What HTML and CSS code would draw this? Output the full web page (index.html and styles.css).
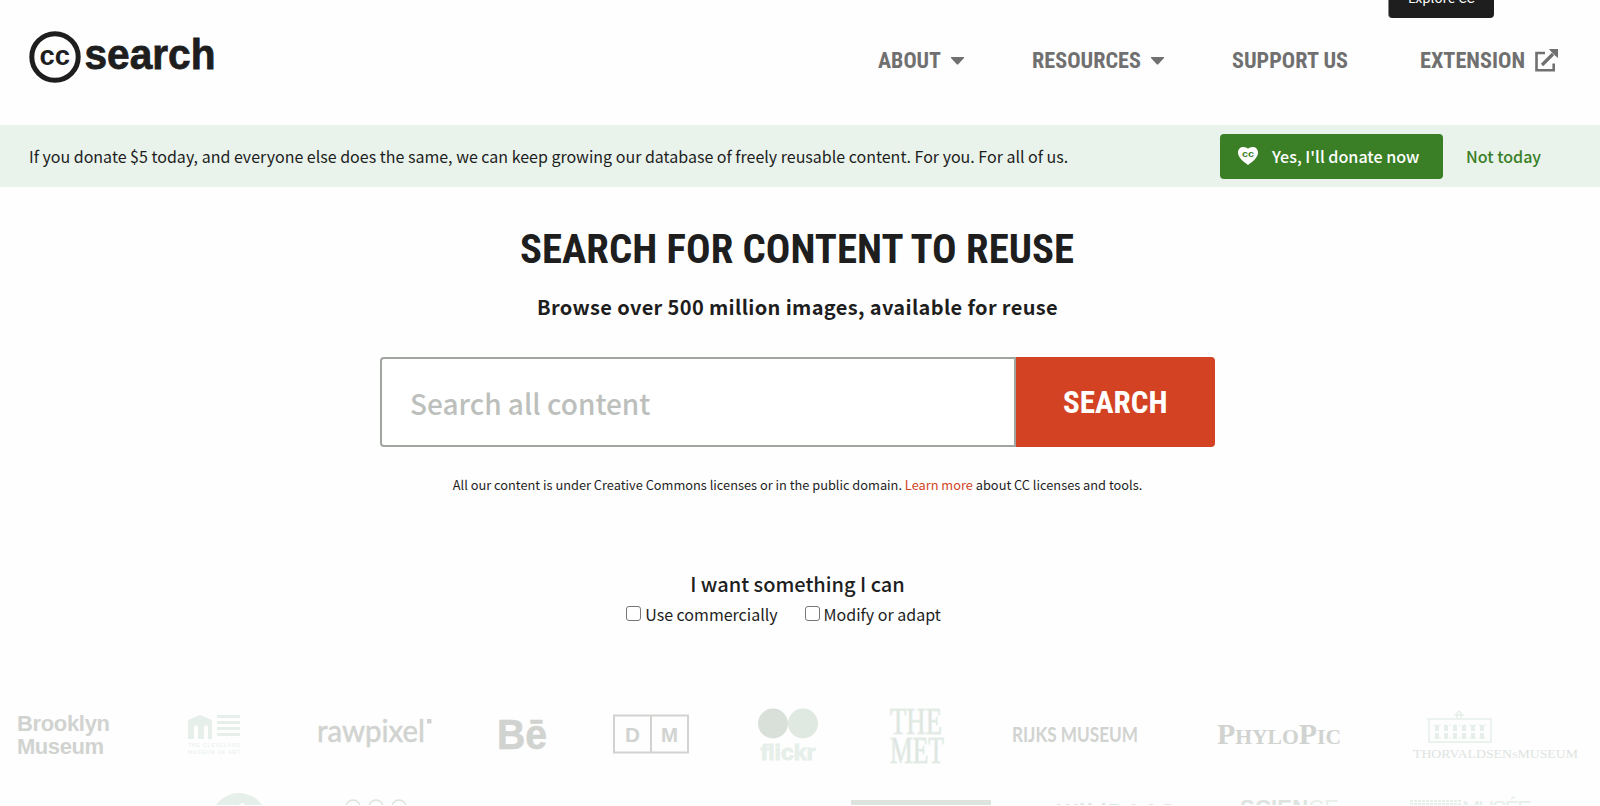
FILE: index.html
```html
<!DOCTYPE html>
<html lang="en">
<head>
<meta charset="utf-8">
<title>CC Search</title>
<link rel="stylesheet" href="styles.css">
</head>
<body>
<header class="header">
  <a class="brand">
    <svg width="190" height="56" viewBox="0 0 190 56">
      <circle cx="26" cy="27" r="23.2" fill="none" stroke="#1e1e1e" stroke-width="5"/>
      <text class="brand-cc" x="10.500" y="34.500" textLength="30.500" lengthAdjust="spacingAndGlyphs">cc</text>
      <text class="brand-text" x="55.500" y="38.500" textLength="131" lengthAdjust="spacingAndGlyphs">search</text>
    </svg>
  </a>
  <nav class="nav">
    <a class="nav-item"><svg width="63" height="30"><text class="cond" y="23" textLength="63" lengthAdjust="spacingAndGlyphs">ABOUT</text></svg><svg class="caret" width="13" height="8"><path d="M0 0H13V1L7.500 7Q6.500 8 5.500 7L0 1Z"/></svg></a>
    <a class="nav-item"><svg width="109" height="30"><text class="cond" y="23" textLength="109" lengthAdjust="spacingAndGlyphs">RESOURCES</text></svg><svg class="caret" width="13" height="8"><path d="M0 0H13V1L7.500 7Q6.500 8 5.500 7L0 1Z"/></svg></a>
    <a class="nav-item"><svg width="116" height="30"><text class="cond" y="23" textLength="116" lengthAdjust="spacingAndGlyphs">SUPPORT US</text></svg></a>
    <a class="nav-item"><svg width="105" height="30"><text class="cond" y="23" textLength="105" lengthAdjust="spacingAndGlyphs">EXTENSION</text></svg><svg class="ext" width="23" height="23" viewBox="0 0 23 23"><path d="M10 4H1.500V21.200H18.700V14.500" fill="none" stroke="#707070" stroke-width="2.600"/><path d="M7 16L18 5" stroke="#707070" stroke-width="3.200"/><path d="M14 0H23V9L20 6.500L16 2.500Z" fill="#707070"/></svg></a>
  </nav>
  <a class="explore"><span>Explore CC</span></a>
</header>

<section class="banner">
  <p class="banner-text">If you donate $5 today, and everyone else does the same, we can keep growing our database of freely reusable content. For you. For all of us.</p>
  <a class="donate"><svg width="20" height="18" viewBox="0 0 20 18"><path d="M10 18C6 15 0 11 0 5.500C0 2 2.500 0 5.300 0C7.300 0 9 .8 10 1.800C11 .8 12.700 0 14.700 0C17.500 0 20 2 20 5.500C20 11 14 15 10 18Z" fill="#fff"/><text class="heart-cc" x="4" y="10" textLength="12" lengthAdjust="spacingAndGlyphs">cc</text></svg><span>Yes, I'll donate now</span></a>
  <a class="later">Not today</a>
</section>

<main class="hero">
  <h1 class="title"><svg width="556" height="48"><text class="cond title-text" x="0" y="38.500" textLength="554" lengthAdjust="spacingAndGlyphs">SEARCH FOR CONTENT TO REUSE</text></svg></h1>
  <h2 class="subtitle">Browse over 500 million images, available for reuse</h2>
  <form class="search">
    <input class="search-input" type="text" placeholder="Search all content">
    <button class="search-button" type="button"><svg width="106" height="36"><text class="cond search-text" x="0" y="29" textLength="104.500" lengthAdjust="spacingAndGlyphs">SEARCH</text></svg></button>
  </form>
  <p class="note">All our content is under Creative Commons licenses or in the public domain. <a>Learn more</a> about CC licenses and tools.</p>
  <div class="filters">
    <h3 class="filters-title">I want something I can</h3>
    <div class="filters-row">
      <label><i class="box"></i><span>Use commercially</span></label>
      <label><i class="box"></i><span>Modify or adapt</span></label>
    </div>
  </div>
</main>

<section class="logos">
  <svg class="logo-brooklyn" width="95" height="60"><g class="sans" font-size="22"><text y="26" textLength="93">Brooklyn</text><text y="49" textLength="87">Museum</text></g></svg>
  <svg class="logo-cleveland pale" width="53" height="60"><path d="M0 15L12 10L24 15V34H20V22Q18 18 16 22V34H10V22Q8 18 6 22V34H0ZM29 10H52V13H29ZM29 16H52V19H29ZM29 22H52V25H29ZM29 28H52V31H29Z"/><g class="sans thin" font-size="5"><text y="41.500" textLength="52">THE CLEVELAND</text><text y="49" textLength="52">MUSEUM OF ART</text></g></svg>
  <svg class="logo-rawpixel" width="116" height="60"><text class="rawpixel" font-size="30" y="36.500" textLength="108" lengthAdjust="spacingAndGlyphs">rawpixel</text><rect x="110" y="14" width="4.500" height="4.500"/></svg>
  <svg class="logo-behance" width="49" height="60"><text class="sans behance" font-size="42" x="-2" y="44" textLength="50" lengthAdjust="spacingAndGlyphs">Bē</text></svg>
  <svg class="logo-dm" width="76" height="60"><path d="M1 10.500H75V47.500H1ZM38 10.500V47.500" fill="none" stroke="#d1d3d0" stroke-width="2"/><g class="sans" font-size="21"><text x="12" y="36.500" textLength="15" lengthAdjust="spacingAndGlyphs">D</text><text x="48" y="36.500" textLength="17" lengthAdjust="spacingAndGlyphs">M</text></g></svg>
  <svg class="logo-flickr pale" width="61" height="60"><circle cx="15" cy="18.500" r="15" fill="#d9e0da"/><circle cx="45" cy="18.500" r="15" fill="#dfe8e1"/><text class="sans heavy" font-size="22" x="2.500" y="55" textLength="55" lengthAdjust="spacingAndGlyphs">flickr</text></svg>
  <svg class="logo-met met" width="55" height="60"><g class="serif heavy" font-size="37"><text y="28.500" textLength="52" lengthAdjust="spacingAndGlyphs">THE</text><text y="57.500" textLength="54" lengthAdjust="spacingAndGlyphs">MET</text></g></svg>
  <svg class="logo-rijks" width="126" height="60"><text class="rijks" font-size="21" x="-1" y="36.500" textLength="126" lengthAdjust="spacingAndGlyphs">RIJKS MUSEUM</text></svg>
  <svg class="logo-phylo" width="124" height="60"><text class="serif bold" x="-1" y="38.500" textLength="124" lengthAdjust="spacingAndGlyphs"><tspan font-size="29">P</tspan><tspan font-size="21">HYLO</tspan><tspan font-size="29">P</tspan><tspan font-size="21">IC</tspan></text></svg>
  <svg class="logo-thor pale" width="166" height="60"><path d="M13 14H78M14 37H78M15 15V37M77 15V37M43 13V8L45 6L47 8V13M40 10H50" fill="none" stroke="#e6efe9" stroke-width="1.500"/><path d="M20 20H74M20 33H74" stroke="#e6efe9" stroke-dasharray="2 3"/><path d="M23 20V35M32 20V35M41 20V35M50 20V35M59 20V35M68 20V35" stroke="#e6efe9" stroke-width="4" stroke-dasharray="6 2"/><text class="serif met" font-size="12.500" x="-1" y="52.500" textLength="165" lengthAdjust="spacingAndGlyphs">THORVALDSEN<tspan font-size="9">S</tspan>MUSEUM</text></svg>
</section>
<section class="logos logos-second">
  <svg class="logo-globe pale" width="56" height="56"><circle cx="28" cy="28" r="28"/><path d="M25 14L29 11L33 10V14Z" fill="#fff"/></svg>
  <svg class="logo-rings" width="64" height="30"><g fill="none" stroke="#dce4de" stroke-width="1.500"><circle cx="8" cy="14" r="7"/><circle cx="31" cy="14" r="7"/><circle cx="54" cy="14" r="7"/></g></svg>
  <svg class="logo-block" width="140" height="30"><path d="M0 7H140V30H0Z" fill="#dde4de"/></svg>
  <svg class="logo-wiki met" width="120" height="30"><text class="sans" font-size="22" y="25.500" textLength="118">WikiDAAS</text></svg>
  <svg class="logo-science" width="100" height="30"><text class="sans" font-size="22" y="22" textLength="99"><tspan class="met">SCIEN</tspan><tspan class="pale thin">CE</tspan></text></svg>
  <svg class="logo-musee pale" width="124" height="30"><path d="M0 8H52M0 11H52" stroke="#e6efe9" stroke-width="2" stroke-dasharray="3 1"/><text class="sans thin" font-size="22" x="52" y="23" textLength="70">MUSÉE</text></svg>
</section>
</body>
</html>
```
FILE: styles.css
```css
* { box-sizing: border-box; }
html { height: 806px; overflow: hidden; }
body { margin: 0; height: 806px; overflow: hidden; background: #fefefe; color: #1e1e1e; font-family: "Noto Sans CJK SC", "Noto Sans", sans-serif; }
p, h1, h2, h3 { margin: 0; }
svg { display: block; flex: none; overflow: visible; }
text { white-space: pre; }
.header { position: relative; height: 125px; display: flex; justify-content: space-between; padding: 29.500px 42px 0 29px; }
.brand-text { font: bold 43px "Liberation Sans", sans-serif; fill: #1e1e1e; stroke: #1e1e1e; stroke-width: .8; }
.brand-cc { font: bold 27px "Liberation Sans", sans-serif; fill: #1e1e1e; }
.heart-cc { font: bold 9.500px "Liberation Sans", sans-serif; fill: #3a7f26; }
.nav { display: flex; gap: 72px; height: 30px; margin-top: 15.500px; }
.nav-item { display: flex; align-items: center; gap: 10px; }
.nav-item:first-child, .nav-item:nth-child(2) { margin-right: -4px; }
.cond { font: 700 22.500px "Roboto Condensed", Roboto, sans-serif; fill: #707070; }
.caret { fill: #707070; margin-top: 2px; }
.explore { position: absolute; left: 1388px; top: -20px; width: 106px; height: 38px; background: #1e1e1e; border-radius: 0 0 4px 4px; border-left: 1px solid #888; color: #fff; font-size: 13.500px; line-height: 35px; text-align: center; }
.banner { height: 62px; background: #e9f3ec; display: flex; align-items: center; padding-left: 29px; font-size: 16px; line-height: 24px; white-space: nowrap; }
.banner-text { width: 1191px; }
.donate { width: 223px; height: 45px; border-radius: 4px; background: #3a7f26; color: #fff; display: flex; align-items: center; padding-left: 18px; gap: 14px; font-size: 16.100px; font-weight: 500; }
.later { margin-left: 23px; color: #3a7f26; font-weight: 500; }
.hero { width: 1595px; display: flex; flex-direction: column; align-items: center; }
.title { margin-top: 37px; height: 48px; }
.title-text { font-size: 40px; fill: #1e1e1e; }
.subtitle { margin-top: 20px; font-size: 20px; line-height: 30px; font-weight: 700; letter-spacing: .35px; }
.search { margin-top: 35px; display: flex; height: 90px; }
.search-input { width: 636px; border: 2px solid #a0a5a0; border-radius: 4px 0 0 4px; background: #fff; padding: 2px 28px 0; font: 500 28px "Noto Sans CJK SC", sans-serif; }
.search-input::placeholder { color: #bdbfbc; opacity: 1; }
.search-button { width: 199px; border: 0; border-radius: 0 4px 4px 0; background: #d34323; padding: 0; display: flex; align-items: center; justify-content: center; }
.search-text { font-size: 32px; fill: #fff; }
.note { margin-top: 28px; font-size: 12.800px; line-height: 20px; }
.note a { color: #d34323; }
.filters { margin-top: 74px; display: flex; flex-direction: column; align-items: center; }
.filters-title { font-size: 20px; line-height: 30px; font-weight: 500; }
.filters-row { display: flex; gap: 27px; margin-right: 28px; font-size: 16px; line-height: 30px; }
.filters-row label { display: flex; align-items: center; gap: 4px; }
.box { width: 15px; height: 15px; border: 1px solid #777; border-radius: 3px; background: #fff; margin-top: -2px; }
.logos { display: flex; height: 60px; margin-top: 76px; fill: #d1d3d0; }
.logos-second { margin-top: 28px; height: 12px; align-items: flex-start; overflow: hidden; }
.pale { fill: #e6efe9; }
.met { fill: #dde4df; }
.sans { font-family: "Liberation Sans", sans-serif; font-weight: 700; }
.heavy { stroke: #e6efe9; stroke-width: 1; }
.thin { font-weight: 400; }
.serif { font-family: "Liberation Serif", serif; }
.bold { font-weight: 700; }
.behance { stroke: #d1d3d0; stroke-width: .6; }
.rawpixel { font-family: Lato, sans-serif; font-weight: 400; stroke: #d1d3d0; stroke-width: .5; }
.rijks { font-family: Lato, sans-serif; font-weight: 700; }
.logo-brooklyn { margin-left: 17px; }
.logo-cleveland { margin-left: 76px; }
.logo-rawpixel { margin-left: 76px; }
.logo-behance { margin-left: 66px; }
.logo-dm { margin-left: 65px; }
.logo-flickr { margin-left: 69px; }
.logo-met { margin-left: 71px; }
.logo-rijks { margin-left: 68px; }
.logo-phylo { margin-left: 79px; }
.logo-thor { margin-left: 72px; }
.logo-globe { margin-left: 211px; }
.logo-rings { margin-left: 78px; }
.logo-block { margin-left: 442px; }
.logo-wiki { margin-left: 66px; }
.logo-science { margin-left: 63px; }
.logo-musee { margin-left: 70px; }
```
